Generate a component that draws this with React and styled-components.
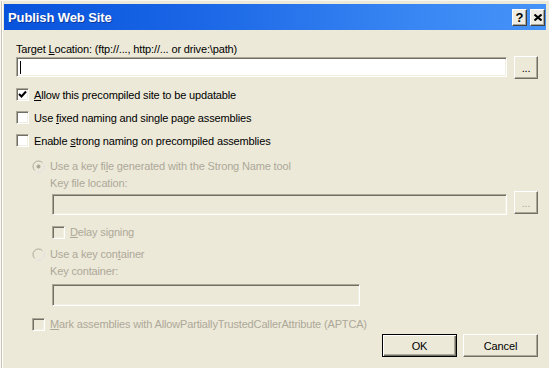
import React from "react";
import styled, { createGlobalStyle, css } from "styled-components";

const colors = {
    face: "#ECE9D8",
    dark: "#716F64",
    shadow: "#ACA899",
    light: "#F1EFE2",
    white: "#FFFFFF",
    disabled: "#ACA899",
    text: "#000000"
};

const GlobalStyle = createGlobalStyle`
    html, body {
        margin: 0;
        padding: 0;
        background: ${colors.face};
    }
    body {
        font-family: "Liberation Sans", Arial, sans-serif;
        font-size: 11px;
        letter-spacing: -0.15px;
        color: ${colors.text};
    }
    * {
        box-sizing: border-box;
    }
`;

const Window = styled.div`
    width: 549px;
    height: 368px;
    padding: 4px 3px 0 4px;
    background: ${colors.face};
    box-shadow: inset 1px 1px 0 #f7f6f0, inset 2px 0 0 #c9c6b8,
        inset 3px 0 0 ${colors.white};
    display: flex;
    flex-direction: column;
    overflow: hidden;
`;

const TitleBar = styled.div`
    height: 26px;
    display: flex;
    align-items: center;
    padding: 0 1px 0 4px;
    background: linear-gradient(to right, #0853dc 0%, #1a66e6 35%, #3886f3 75%, #4593f8 100%);
`;

const Title = styled.div`
    font-family: "Liberation Sans", Arial, sans-serif;
    font-weight: bold;
    font-size: 13px;
    letter-spacing: -0.1px;
    color: ${colors.white};
    text-shadow: 1px 1px 0 #0c3a9e;
`;

const CaptionButtons = styled.div`
    margin-left: auto;
    display: flex;
    gap: 3px;
    padding-top: 1px;
`;

const CaptionButton = styled.div`
    width: 15px;
    height: 17px;
    display: flex;
    align-items: center;
    justify-content: center;
    background: #efede3;
    border: 1px solid;
    border-color: ${colors.white} #404040 #404040 ${colors.white};
    box-shadow: inset -1px -1px 0 ${colors.shadow};
    font-family: "Liberation Sans", Arial, sans-serif;
    font-weight: bold;
    font-size: 13px;
    line-height: 1;
    color: #000;
`;

const Body = styled.div`
    flex: 1;
    display: flex;
    flex-direction: column;
    padding: 0 8px 0 12px;
`;

const Label = styled.div`
    height: 16px;
    line-height: 16px;
    white-space: nowrap;
    margin-top: ${(p) => p.$top || 0}px;
    padding-left: ${(p) => p.$indent || 0}px;
    color: ${(p) => (p.$disabled ? colors.disabled : colors.text)};
`;

const FieldRow = styled.div`
    display: flex;
    align-items: flex-start;
    gap: 7px;
    margin-top: ${(p) => p.$top || 0}px;
    padding-left: ${(p) => p.$indent || 0}px;
`;

const sunken = css`
    border: 1px solid;
    border-color: ${colors.shadow} ${colors.white} ${colors.white} ${colors.shadow};
    box-shadow: inset 1px 1px 0 ${colors.dark}, inset -1px -1px 0 ${colors.light};
`;

const TextBox = styled.div`
    ${sunken};
    height: ${(p) => p.$height || 21}px;
    margin-top: ${(p) => p.$offset || 0}px;
    flex: ${(p) => (p.$width ? "none" : 1)};
    width: ${(p) => (p.$width ? p.$width + "px" : "auto")};
    background: ${(p) => (p.$disabled ? colors.face : colors.white)};
    display: flex;
    align-items: center;
    padding-left: 3px;
`;

const Caret = styled.span`
    width: 1px;
    height: 13px;
    background: #000;
`;

const raised = css`
    border: 1px solid;
    border-color: ${colors.white} ${colors.dark} ${colors.dark} ${colors.white};
    box-shadow: inset -1px -1px 0 ${colors.shadow};
`;

const Button = styled.div`
    ${raised};
    width: ${(p) => p.$width || 75}px;
    height: 23px;
    display: flex;
    align-items: center;
    justify-content: center;
    background: ${colors.face};
    color: ${(p) => (p.$disabled ? colors.disabled : "#000")};
    font-size: 11px;
    ${(p) =>
        p.$default &&
        css`
            border: 1px solid #000;
            box-shadow: inset 1px 1px 0 ${colors.white}, inset -1px -1px 0 ${colors.dark},
                inset -2px -2px 0 ${colors.shadow};
        `}
`;

const OptionRow = styled.div`
    display: flex;
    align-items: center;
    gap: 5px;
    white-space: nowrap;
    height: ${(p) => p.$height || 16}px;
    margin-top: ${(p) => p.$top || 0}px;
    padding-left: ${(p) => p.$indent || 0}px;
    color: ${(p) => (p.$disabled ? colors.disabled : colors.text)};
`;

const Box = styled.div`
    ${sunken};
    width: 13px;
    height: 13px;
    flex: none;
    background: ${(p) => (p.$disabled ? colors.face : colors.white)};
    display: flex;
    align-items: center;
    justify-content: center;
`;

const Indented = styled.div`
    display: flex;
    flex-direction: column;
    padding-left: 16px;
`;

const ButtonRow = styled.div`
    display: flex;
    justify-content: flex-end;
    gap: 6px;
    margin-top: 2px;
`;

const Key = styled.u`
    text-decoration: underline;
    text-underline-offset: 1px;
`;

const Check = ({ checked, disabled }) => (
    <Box $disabled={disabled}>
        {checked && (
            <svg width="9" height="9" viewBox="0 0 9 9">
                <path d="M1 4 L3.5 6.5 L8 1.5" fill="none" stroke="#000" strokeWidth="2" />
            </svg>
        )}
    </Box>
);

const Radio = ({ checked }) => (
    <svg width="13" height="13" viewBox="0 0 13 13" style={{ flex: "none" }}>
        <circle cx="6.5" cy="6.5" r="5.5" fill={colors.face} stroke={colors.shadow} />
        <path d="M2.6 10.4 A5.5 5.5 0 0 0 10.4 2.6" fill="none" stroke="#fff" />
        {checked && <circle cx="6.5" cy="6.5" r="2" fill={colors.shadow} />}
    </svg>
);

const CloseGlyph = () => (
    <svg width="8" height="7" viewBox="0 0 8 7">
        <path d="M0.5 0.5 L7.5 6.5 M7.5 0.5 L0.5 6.5" stroke="#000" strokeWidth="2" />
    </svg>
);

export default function App() {
    return (
        <Window>
            <GlobalStyle />
            <TitleBar>
                <Title>Publish Web Site</Title>
                <CaptionButtons>
                    <CaptionButton>?</CaptionButton>
                    <CaptionButton>
                        <CloseGlyph />
                    </CaptionButton>
                </CaptionButtons>
            </TitleBar>
            <Body>
                <Label $top={11}>
                    Target <Key>L</Key>ocation: (ftp://..., http://... or drive:\path)
                </Label>
                <FieldRow $top={-1}>
                    <TextBox $height={20} $offset={1}>
                        <Caret />
                    </TextBox>
                    <Button $width={24}>...</Button>
                </FieldRow>

                <OptionRow $height={23} $top={4}>
                    <Check checked />
                    <span>
                        <Key>A</Key>llow this precompiled site to be updatable
                    </span>
                </OptionRow>
                <OptionRow $height={23}>
                    <Check />
                    <span>
                        Use <Key>f</Key>ixed naming and single page assemblies
                    </span>
                </OptionRow>
                <OptionRow $height={23}>
                    <Check />
                    <span>
                        Enable <Key>s</Key>trong naming on precompiled assemblies
                    </span>
                </OptionRow>

                <Indented>
                    <OptionRow $top={6} $disabled>
                        <Radio checked />
                        <span>
                            Use a key fi<Key>l</Key>e generated with the Strong Name tool
                        </span>
                    </OptionRow>
                    <Label $top={1} $indent={18} $disabled>
                        Key file location:
                    </Label>
                    <FieldRow $indent={20}>
                        <TextBox $disabled $offset={3} />
                        <Button $width={24} $disabled>
                            ...
                        </Button>
                    </FieldRow>
                    <OptionRow $top={9} $indent={20} $disabled>
                        <Check disabled />
                        <span>
                            <Key>D</Key>elay signing
                        </span>
                    </OptionRow>
                    <OptionRow $top={6} $disabled>
                        <Radio />
                        <span>
                            Use a key con<Key>t</Key>ainer
                        </span>
                    </OptionRow>
                    <Label $top={1} $indent={18} $disabled>
                        Key container:
                    </Label>
                    <FieldRow $top={5} $indent={20}>
                        <TextBox $disabled $width={308} $height={22} />
                    </FieldRow>
                    <OptionRow $top={10} $disabled>
                        <Check disabled />
                        <span>
                            <Key>M</Key>ark assemblies with AllowPartiallyTrustedCallerAttribute (APTCA)
                        </span>
                    </OptionRow>
                </Indented>

                <ButtonRow>
                    <Button $default>OK</Button>
                    <Button>Cancel</Button>
                </ButtonRow>
            </Body>
        </Window>
    );
}
